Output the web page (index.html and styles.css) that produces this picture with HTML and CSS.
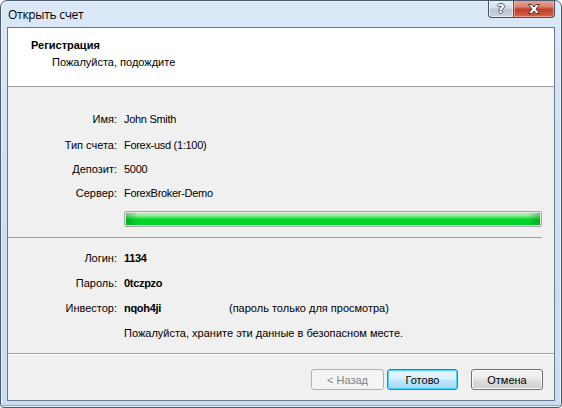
FILE: index.html
```html
<!DOCTYPE html>
<html lang="ru">
<head>
<meta charset="utf-8">
<title>Открыть счет</title>
<link rel="stylesheet" href="styles.css">
</head>
<body>
<div class="window">
  <div class="titlebar">
    <div class="title">Открыть счет</div>
    <div class="caption-buttons">
      <div class="cbtn help"><span class="help-glyph">?</span></div>
      <div class="cbtn close">
        <svg width="16" height="12" viewBox="0 0 16 12">
          <path d="M2.5 1.5 L6 1.5 L8 4 L10 1.5 L13.5 1.5 L10 6 L13.5 10.5 L10 10.5 L8 8 L6 10.5 L2.5 10.5 L6 6 Z" fill="#ffffff" stroke="#4a3a38" stroke-width="1" stroke-linejoin="round"/>
        </svg>
      </div>
    </div>
  </div>
  <div class="client">
    <div class="header">
      <div class="h-title">Регистрация</div>
      <div class="h-sub">Пожалуйста, подождите</div>
    </div>
    <div class="body">
      <div class="form group1">
        <div class="label">Имя:</div><div class="value latin">John Smith</div>
        <div class="label">Тип счета:</div><div class="value latin">Forex-usd (1:100)</div>
        <div class="label">Депозит:</div><div class="value latin">5000</div>
        <div class="label">Сервер:</div><div class="value latin">ForexBroker-Demo</div>
      </div>
      <div class="progress-row">
        <div class="progress"><div class="progress-fill"></div></div>
      </div>
      <div class="sep"></div>
      <div class="form group2">
        <div class="label">Логин:</div><div class="value strong latin">1134</div>
        <div class="label">Пароль:</div><div class="value strong latin">0tczpzo</div>
        <div class="label">Инвестор:</div><div class="value"><span class="strong inv latin">nqoh4ji</span><span>(пароль только для просмотра)</span></div>
        <div class="label"></div><div class="value">Пожалуйста, храните эти данные в безопасном месте.</div>
      </div>
      <div class="sep full"></div>
      <div class="buttons">
        <button class="btn disabled">&lt; Назад</button>
        <button class="btn default">Готово</button>
        <button class="btn cancel">Отмена</button>
      </div>
    </div>
  </div>
</div>
</body>
</html>
```
FILE: styles.css
```css
* { box-sizing: border-box; }
html, body { margin: 0; padding: 0; }
body {
  width: 562px;
  height: 408px;
  background: #ffffff;
  font-family: "Liberation Sans", Arial, sans-serif;
  font-size: 11px;
  color: #000;
}
.window {
  width: 562px;
  height: 408px;
  border: 1px solid #4d5a69;
  border-radius: 7px 7px 4px 4px;
  background: linear-gradient(180deg, #dbe8f7 0%, #cde0f5 40%, #c9ddf3 100%);
  box-shadow: inset 0 0 0 1px #e9f2fb, inset 0 -2px 0 #45c3f0;
  display: flex;
  flex-direction: column;
  overflow: hidden;
}
.titlebar {
  height: 26px;
  display: flex;
  align-items: flex-start;
  justify-content: space-between;
  padding: 0 6px 0 7px;
}
.title {
  font-family: "Open Sans", "Noto Sans", sans-serif;
  font-size: 12px;
  line-height: 16px;
  padding-top: 6px;
  letter-spacing: -0.3px;
  color: #000;
}
.caption-buttons {
  display: flex;
  height: 18px;
  margin-top: -1px;
}
.cbtn {
  height: 18px;
  border: 1px solid #44505e;
  border-top: none;
  display: flex;
  align-items: center;
  justify-content: center;
}
.help {
  width: 25px;
  border-right: none;
  border-radius: 0 0 0 4px;
  background: linear-gradient(180deg, #e8eef5 0%, #d6dfe9 45%, #b8c6d4 55%, #c9d6e2 100%);
  box-shadow: inset 0 0 0 1px rgba(255,255,255,0.6);
}
.help-glyph {
  font-family: "DejaVu Sans", sans-serif;
  font-weight: bold;
  font-size: 13px;
  line-height: 14px;
  color: #fff;
  text-shadow: 1px 0 0 #555f6b, -1px 0 0 #555f6b, 0 1px 0 #555f6b, 0 -1px 0 #555f6b;
}
.close {
  width: 42px;
  border-radius: 0 0 4px 0;
  background: linear-gradient(180deg, #e9a899 0%, #d9826d 40%, #c43b24 55%, #d2664b 100%);
  box-shadow: inset 0 0 0 1px rgba(255,220,210,0.5);
}
.client {
  flex: 1;
  margin: 0 6px 6px 6px;
  border: 1px solid #6d7a89;
  background: #f0f0f0;
  display: flex;
  flex-direction: column;
}
.header {
  height: 59px;
  background: #ffffff;
  border-bottom: 1px solid #a0a0a0;
  padding: 10px 0 0 23px;
}
.h-title {
  font-weight: bold;
  line-height: 14px;
}
.h-sub {
  line-height: 14px;
  margin-top: 3px;
  padding-left: 21px;
}
.body {
  flex: 1;
  display: flex;
  flex-direction: column;
}
.form {
  display: grid;
  grid-template-columns: 109px 1fr;
  column-gap: 7px;
  align-items: center;
}
.group1 {
  padding-top: 24px;
  grid-template-rows: 18px 16px 16px 16px;
  row-gap: 8px;
}
.group1 .label, .group1 .value { align-self: start; }
.group2 {
  padding-top: 12px;
  grid-auto-rows: 16px;
  row-gap: 9px;
}
.label { text-align: right; line-height: 16px; color: #000; }
.value { line-height: 16px; white-space: nowrap; }
.latin { letter-spacing: -0.3px; }
.strong { font-weight: bold; }
.inv { display: inline-block; width: 105px; }
.progress-row {
  padding: 10px 12px 0 116px;
}
.progress {
  height: 16px;
  border: 1px solid #a6a6a6;
  border-radius: 2px;
  background: #e6e6e6;
  padding: 1px;
}
.progress-fill {
  height: 100%;
  background:
    linear-gradient(90deg, rgba(0,110,20,0.35) 0%, rgba(0,0,0,0) 3%, rgba(0,0,0,0) 97%, rgba(0,110,20,0.35) 100%),
    linear-gradient(180deg, #b6f5b6 0%, #8ceb90 25%, #1ee038 45%, #00d42a 60%, #00d42a 100%);
}
.sep {
  height: 1px;
  background: #a0a0a0;
  margin: 10px 12px 0 0;
}
.sep.full {
  margin: 12px 0 0 0;
  box-shadow: 0 1px 0 #ffffff;
}
.buttons {
  display: flex;
  justify-content: flex-end;
  padding: 15px 11px 0 0;
}
.btn {
  font-family: "Liberation Sans", Arial, sans-serif;
  font-size: 11px;
  width: 73px;
  height: 21px;
  padding: 0;
  border: 1px solid #707070;
  border-radius: 3px;
  background: linear-gradient(180deg, #f2f2f2 0%, #ebebeb 48%, #dddddd 52%, #cfcfcf 100%);
  box-shadow: inset 0 0 0 1px #fbfbfb;
  color: #000;
}
.btn.disabled {
  border-color: #adb2b5;
  background: #f4f4f4;
  color: #838383;
  box-shadow: none;
}
.btn.default {
  margin-left: 3px;
  width: 71px;
  border-color: #3c7fb1;
  background: linear-gradient(180deg, #eaf6fd 0%, #d9f0fc 48%, #bee6fd 52%, #a7d9f5 100%);
  box-shadow: inset 0 0 0 1px #48d5fd;
}
.btn.cancel {
  margin-left: 13px;
  width: 72px;
}
```
